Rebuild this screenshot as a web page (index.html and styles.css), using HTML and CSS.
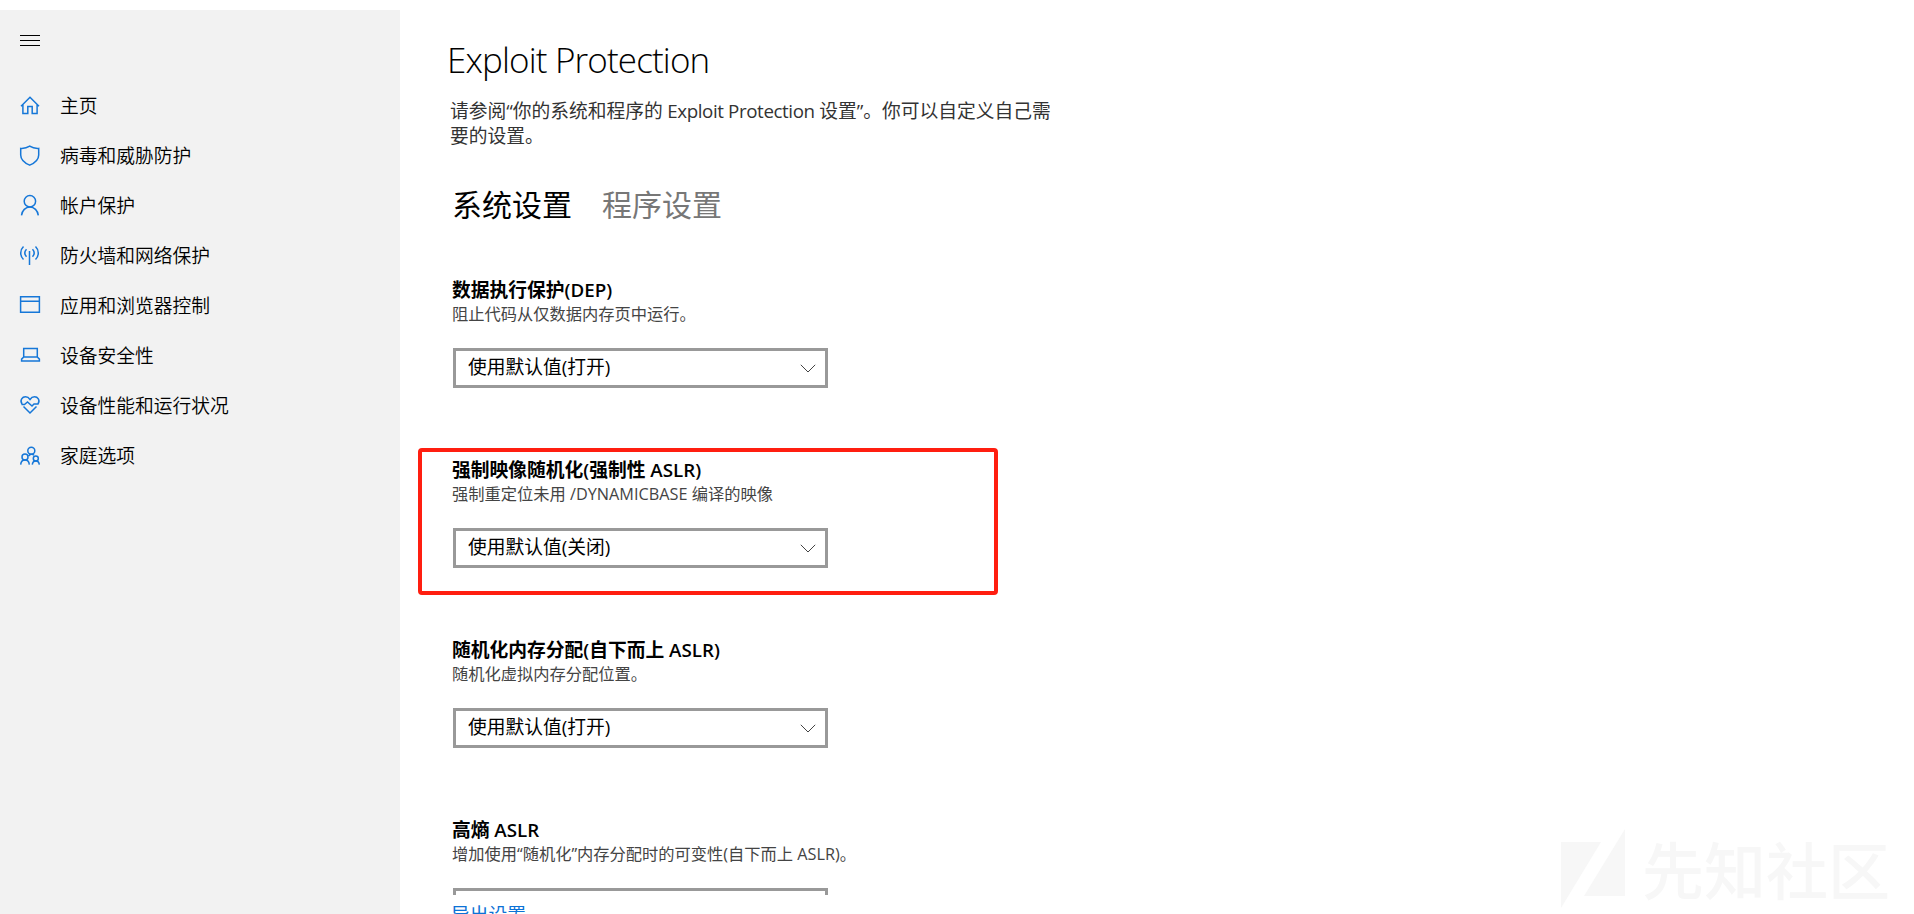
FILE: index.html
```html
<!DOCTYPE html>
<html lang="zh-CN">
<head>
<meta charset="utf-8">
<title>Exploit Protection</title>
<link rel="stylesheet" href="styles.css">
</head>
<body>
<div class="app">
  <aside class="sidebar">
    <button class="menu" aria-label="菜单"><span></span><span></span><span></span></button>
    <nav class="nav">
      <a class="nav-item"><svg viewBox="0 0 20 20"><path d="M1 10.200 10 1.200l9 9M2.900 8.600v8.900h4.900v-7h4.400v7h4.900V8.600"/></svg><span>主页</span></a>
      <a class="nav-item"><svg viewBox="0 0 20 20"><path d="M9.700.2C7.200 1.800 4 2.600.700 2.400v6.500c0 4.400 3.500 7.800 9 10.200 5.500-2.400 9-5.800 9-10.200V2.400C15.400 2.600 12.200 1.800 9.700.2z"/></svg><span>病毒和威胁防护</span></a>
      <a class="nav-item"><svg viewBox="0 0 20 20"><circle cx="9.900" cy="5.300" r="5.700"/><path d="M1.500 19.300c.6-4.700 4-8.300 8.400-8.300s7.800 3.600 8.400 8.300"/></svg><span>帐户保护</span></a>
      <a class="nav-item"><svg viewBox="0 0 20 20"><path d="M9.500 5v14M3.500.5c-3.700 3.500-3.700 9.500 0 13M15.500.5c3.700 3.500 3.700 9.500 0 13M6.500 3.200c-2 2.200-2 5.300 0 7.500M12.500 3.200c2 2.200 2 5.300 0 7.500"/></svg><span>防火墙和网络保护</span></a>
      <a class="nav-item"><svg viewBox="0 0 20 20"><path d="M.6.800h18.800v15.500H.6zM.6 5.200h18.800"/></svg><span>应用和浏览器控制</span></a>
      <a class="nav-item"><svg viewBox="0 0 20 20"><path d="M3.700 2.500h13.600v8.500H3.700zM3.700 11 1.600 13.100v1.900h17.800v-1.900l-2.100-2.100"/></svg><span>设备安全性</span></a>
      <a class="nav-item"><svg viewBox="0 0 20 20"><path d="M2 8C-.6 4 2.500.8 5.500.8 7.500.8 9 2 10 3.500 11 2 12.500.8 14.500.8c3 0 6.100 3.200 3.500 7.200h-4l-2 2-4.500-4L4.500 8.500H1.500M3.500 10.500l6.500 6.500 6.500-6.500"/></svg><span>设备性能和运行状况</span></a>
      <a class="nav-item"><svg viewBox="0 0 20 20"><circle cx="11.300" cy="4.800" r="3.500"/><circle cx="5" cy="11" r="3"/><circle cx="15.800" cy="12.500" r="2.500"/><path d="M.7 18.600c.2-2.800 2-4.600 4.300-4.600s4.100 1.800 4.300 4.600M12.300 18.600c.2-2.300 1.600-3.600 3.500-3.600s3.300 1.300 3.500 3.600M8.500 10c1.500-2 4-2.200 5.500-.8"/></svg><span>家庭选项</span></a>
    </nav>
  </aside>
  <main class="content">
    <div class="scroll">
      <h1>Exploit Protection</h1>
      <p class="intro">请参阅“你的系统和程序的<span class="latin"> Exploit Protection </span>设置”。你可以自定义自己需要的设置。</p>
      <div class="tabs"><span class="tab active">系统设置</span><span class="tab">程序设置</span></div>
      <section class="setting">
        <h2>数据执行保护<span>(DEP)</span></h2>
        <p>阻止代码从仅数据内存页中运行。</p>
        <div class="select"><span>使用默认值(打开)</span><svg viewBox="0 0 16 9"><path d="M.8.800 8 8 15.200.8"/></svg></div>
      </section>
      <section class="setting marked">
        <h2>强制映像随机化<span>(</span>强制性<span> ASLR)</span></h2>
        <p>强制重定位未用 /DYNAMICBASE 编译的映像</p>
        <div class="select"><span>使用默认值(关闭)</span><svg viewBox="0 0 16 9"><path d="M.8.800 8 8 15.200.8"/></svg></div>
      </section>
      <section class="setting">
        <h2>随机化内存分配<span>(</span>自下而上<span> ASLR)</span></h2>
        <p>随机化虚拟内存分配位置。</p>
        <div class="select"><span>使用默认值(打开)</span><svg viewBox="0 0 16 9"><path d="M.8.800 8 8 15.200.8"/></svg></div>
      </section>
      <section class="setting">
        <h2>高熵<span> ASLR</span></h2>
        <p>增加使用“随机化”内存分配时的可变性(自下而上 ASLR)。</p>
        <div class="select"></div>
      </section>
    </div>
    <a class="export">导出设置</a>
  </main>
  <div class="watermark">
    <svg viewBox="0 0 64 80"><path d="M0 13h40L0 79zM64 0v67H23z"/></svg>
    <span>先知社区</span>
  </div>
</div>
</body>
</html>
```

FILE: styles.css
```css
*, *::before { box-sizing: border-box; }
body {
  margin: 0;
  background: #fff;
  color: #000;
  font: 18.75px/24px "Open Sans", "Noto Sans CJK SC", sans-serif;
}
h1, h2, p { margin: 0; }
.app {
  position: relative;
  display: flex;
  height: 914px;
  padding-top: 10px;
  overflow: hidden;
}
.sidebar {
  width: 400px;
  flex: none;
  background: #f2f2f2;
}
.menu {
  display: flex;
  flex-direction: column;
  gap: 4px;
  margin: 25px 0 0 20px;
  padding: 0;
  border: 0;
  background: none;
}
.menu span { width: 20px; height: 1px; background: #000; }
.nav { margin-top: 35px; }
.nav-item {
  display: flex;
  align-items: center;
  gap: 20px;
  height: 50px;
  padding-left: 20px;
  font-weight: 350;
}
.nav-item svg {
  width: 20px;
  height: 20px;
  overflow: visible;
  fill: none;
  stroke: #1677d8;
  stroke-width: 1.5;
}
.content {
  flex: 1;
  display: flex;
  flex-direction: column;
}
.scroll {
  height: 885px;
  flex: none;
  overflow: hidden;
  padding: 26px 0 0 52px;
}
h1 {
  margin-left: -5px;
  font-size: 35px;
  line-height: 48px;
  font-weight: 350;
  letter-spacing: -0.85px;
}
.intro {
  width: 610px;
  margin: 14px 0 0 -2px;
  line-height: 25px;
  color: #333;
}
.intro .latin { letter-spacing: -0.4px; }
.tabs {
  display: flex;
  gap: 30px;
  margin-top: 37px;
  font-size: 30px;
  line-height: 40px;
}
.tab { color: #777; }
.tab.active { color: #000; }
.setting {
  position: relative;
  height: 180px;
}
.tabs + .setting { margin-top: 53px; }
.setting h2 {
  font-size: 18.75px;
  line-height: 24px;
  font-weight: 700;
  white-space: pre;
}
.setting h2 span { font-weight: 600; }
.setting p {
  font-size: 16.25px;
  line-height: 24px;
  color: #444;
}
.select {
  display: flex;
  align-items: center;
  justify-content: space-between;
  width: 375px;
  height: 40px;
  margin: 22px 0 0 1px;
  padding: 0 9px 2px 12px;
  border: 3px solid #999;
}
.select svg {
  width: 16px;
  height: 9px;
  margin-top: 3px;
  fill: none;
  stroke: #444;
}
.marked::before {
  content: "";
  position: absolute;
  left: -34px;
  top: -10px;
  width: 580px;
  height: 147px;
  border: 4px solid #ff1e10;
  border-radius: 4px;
}
.export {
  margin: 8px 0 0 51px;
  color: #0c72d6;
  white-space: nowrap;
}
.watermark {
  position: absolute;
  left: 1561px;
  top: 829px;
  display: flex;
  gap: 17px;
  color: #f7f7f7;
  font-size: 62px;
  line-height: 78px;
  font-weight: 500;
  font-family: "Noto Sans CJK SC", sans-serif;
}
.watermark svg { width: 64px; height: 80px; fill: #f7f7f7; }
```
